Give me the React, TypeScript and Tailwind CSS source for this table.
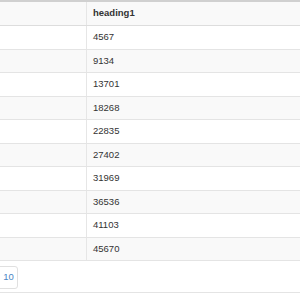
const values = [4567, 9134, 13701, 18268, 22835, 27402, 31969, 36536, 41103, 45670];

export default function App() {
  return (
    <div
      className="w-[300px] h-[300px] overflow-hidden bg-white text-[#333]"
      style={{ fontFamily: '"Liberation Sans", Arial, sans-serif' }}
    >
      {/* table */}
      <div className="border-t-2 border-[#d0d0d0]">
        <div className="flex h-[24px] bg-[#f9f9f9] border-b border-[#dddddd]">
          <div className="w-[87px] shrink-0 border-r border-[#e6e6e6]" />
          <div className="flex items-center pl-[6px] text-[9.5px] font-bold">heading1</div>
        </div>
        {values.map((v, i) => (
          <div
            key={v}
            className={`flex h-[23.5px] border-b border-[#e4e4e4] ${i % 2 === 1 ? 'bg-[#f9f9f9]' : 'bg-white'}`}
          >
            <div className="w-[87px] shrink-0 border-r border-[#e6e6e6]" />
            <div className="flex items-center pl-[6px] text-[9.5px]">{v}</div>
          </div>
        ))}
      </div>

      {/* pagination */}
      <div className="h-[32px] border-b border-[#e4e4e4] flex items-center">
        <div className="-ml-[4px] mt-[2px] h-[23px] w-[22px] flex items-center justify-center pl-[3px] border border-[#e0e0e0] rounded-[3px] text-[9.5px] text-[#4a86c5]">
          10
        </div>
      </div>
    </div>
  );
}
